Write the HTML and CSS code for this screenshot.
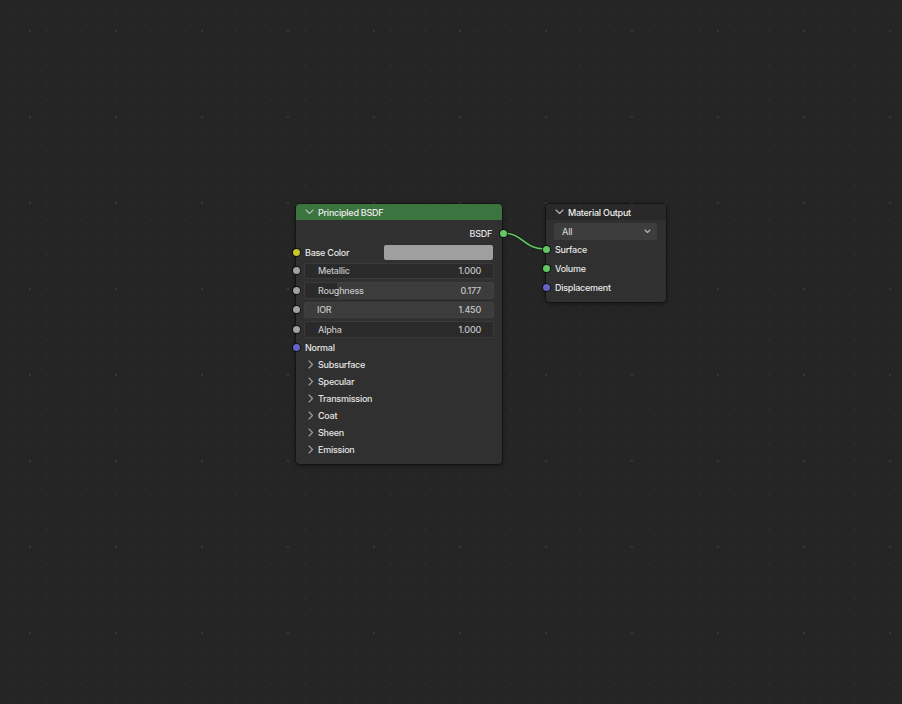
FILE: index.html
```html
<!DOCTYPE html>
<html>
<head>
<meta charset="utf-8">
<link rel="stylesheet" href="styles.css">
</head>
<body>
<div class="canvas">
  <svg class="links" width="902" height="704" viewBox="0 0 902 704">
    <path d="M502 233 C 524 233, 523 249, 545 249" class="link-shadow"/>
    <path d="M502 233 C 524 233, 523 249, 545 249" class="link"/>
  </svg>

  <div class="node node-bsdf">
    <div class="header header-green">
      <svg class="chev-down" width="9" height="6" viewBox="0 0 9 6"><path d="M1 1 L4.5 4.5 L8 1"/></svg>
      <span>Principled BSDF</span>
    </div>
    <div class="body">
      <div class="row row-out">
        <span>BSDF</span>
        <i class="socket sock-right green"></i>
      </div>
      <div class="row row-color">
        <i class="socket sock-left yellow"></i>
        <span class="label">Base Color</span>
        <div class="swatch"></div>
      </div>
      <div class="fields">
        <div class="field">
          <i class="socket sock-left grey"></i>
          <div class="fill" style="width:100%"></div>
          <span class="fl">Metallic</span><span class="fv">1.000</span>
        </div>
        <div class="field">
          <i class="socket sock-left grey"></i>
          <div class="fill" style="width:17.7%"></div>
          <span class="fl">Roughness</span><span class="fv">0.177</span>
        </div>
        <div class="field">
          <i class="socket sock-left grey"></i>
          <span class="fl ior">IOR</span><span class="fv">1.450</span>
        </div>
        <div class="field">
          <i class="socket sock-left grey"></i>
          <div class="fill" style="width:100%"></div>
          <span class="fl">Alpha</span><span class="fv">1.000</span>
        </div>
      </div>
      <div class="row row-normal">
        <i class="socket sock-left purple"></i>
        <span class="label">Normal</span>
      </div>
      <div class="panels">
        <div class="panel"><svg class="chev-right" width="6" height="9" viewBox="0 0 6 9"><path d="M1 1 L4.5 4.5 L1 8"/></svg><span>Subsurface</span></div>
        <div class="panel"><svg class="chev-right" width="6" height="9" viewBox="0 0 6 9"><path d="M1 1 L4.5 4.5 L1 8"/></svg><span>Specular</span></div>
        <div class="panel"><svg class="chev-right" width="6" height="9" viewBox="0 0 6 9"><path d="M1 1 L4.5 4.5 L1 8"/></svg><span>Transmission</span></div>
        <div class="panel"><svg class="chev-right" width="6" height="9" viewBox="0 0 6 9"><path d="M1 1 L4.5 4.5 L1 8"/></svg><span>Coat</span></div>
        <div class="panel"><svg class="chev-right" width="6" height="9" viewBox="0 0 6 9"><path d="M1 1 L4.5 4.5 L1 8"/></svg><span>Sheen</span></div>
        <div class="panel"><svg class="chev-right" width="6" height="9" viewBox="0 0 6 9"><path d="M1 1 L4.5 4.5 L1 8"/></svg><span>Emission</span></div>
      </div>
    </div>
  </div>

  <div class="node node-output">
    <div class="header header-dark">
      <svg class="chev-down" width="9" height="6" viewBox="0 0 9 6"><path d="M1 1 L4.5 4.5 L8 1"/></svg>
      <span>Material Output</span>
    </div>
    <div class="body body-out">
      <div class="dropdown">
        <span>All</span>
        <svg class="chev-small" width="7" height="5" viewBox="0 0 7 5"><path d="M1 1 L3.5 3.5 L6 1"/></svg>
      </div>
      <div class="row row-in">
        <i class="socket sock-left green"></i>
        <span class="label">Surface</span>
      </div>
      <div class="row row-in">
        <i class="socket sock-left green"></i>
        <span class="label">Volume</span>
      </div>
      <div class="row row-in">
        <i class="socket sock-left purple"></i>
        <span class="label">Displacement</span>
      </div>
    </div>
  </div>
</div>
</body>
</html>
```

FILE: styles.css
```css
html, body {
  margin: 0;
  padding: 0;
}
body {
  width: 902px;
  height: 704px;
  overflow: hidden;
  background-color: #252525;
  background-image:
    radial-gradient(circle at 43px 43px, #363636 0, #363636 1px, transparent 1.6px),
    radial-gradient(circle at 8.6px 8.6px, #2c2c2c 0, #2c2c2c 0.7px, transparent 1.2px);
  background-size: 86px 86px, 17.2px 17.2px;
  background-position: -13px -12px, 21.4px 22.4px;
  font-family: Inter, "Noto Sans", "DejaVu Sans", sans-serif;
  font-size: 9px;
  font-weight: 500;
  letter-spacing: -0.25px;
  color: #e4e4e4;
}
.canvas {
  position: relative;
  width: 902px;
  height: 704px;
}
.links {
  position: absolute;
  left: 0;
  top: 0;
  z-index: 2;
  pointer-events: none;
}
.link {
  fill: none;
  stroke: #5fc25f;
  stroke-width: 1.6;
}
.link-shadow {
  fill: none;
  stroke: rgba(0,0,0,0.35);
  stroke-width: 3.2;
}
.node {
  position: absolute;
  background: #303030;
  border-radius: 4px;
  box-shadow: 0 1px 5px rgba(0,0,0,0.55), 0 0 0 1px rgba(0,0,0,0.25);
  display: flex;
  flex-direction: column;
}
.node-bsdf {
  left: 296px;
  top: 204px;
  width: 206px;
  height: 260px;
}
.node-output {
  left: 546px;
  top: 204px;
  width: 120px;
  height: 98px;
}
.header {
  height: 16px;
  display: flex;
  align-items: center;
  border-radius: 4px 4px 0 0;
  padding-left: 9px;
  gap: 4px;
  color: #ececec;
}
.header-green {
  background: #3c743f;
}
.header-dark {
  background: #292929;
}
.chev-down path, .chev-right path, .chev-small path {
  fill: none;
  stroke: #b8b8b8;
  stroke-width: 1.1;
  stroke-linecap: round;
  stroke-linejoin: round;
}
.chev-right path {
  stroke: #a0a0a0;
}
.body {
  display: flex;
  flex-direction: column;
  padding: 4px 9px 0 9px;
}
.row {
  position: relative;
  display: flex;
  align-items: center;
}
.row-out {
  height: 18px;
  justify-content: flex-end;
  padding-right: 1px;
}
.row-color {
  height: 20px;
  justify-content: space-between;
}
.swatch {
  width: 109px;
  height: 15px;
  background: #9f9f9f;
  border-radius: 2px;
}
.fields {
  display: flex;
  flex-direction: column;
  gap: 3px;
  margin: 0.5px -1px 0 -1px;
}
.field {
  position: relative;
  height: 16.5px;
  background: #3c3c3c;
  border-radius: 2px;
  box-shadow: inset 0 0 0 1px #404040;
  display: flex;
  align-items: center;
  justify-content: space-between;
  padding: 0 13px 0 14px;
  color: #c4c4c4;
}
.fill {
  position: absolute;
  left: 0;
  top: 0;
  bottom: 0;
  background: #2a2a2a;
  border-radius: 2px;
  box-shadow: inset 0 0 0 1px #3a3a3a;
}
.fl, .fv {
  position: relative;
}
.fl.ior {
  margin-left: -1px;
}
.row-normal {
  height: 18px;
  margin-top: 0.5px;
}
.panels {
  display: flex;
  flex-direction: column;
}
.panel {
  height: 17px;
  display: flex;
  align-items: center;
  gap: 4px;
  padding-left: 3px;
}
.socket {
  position: absolute;
  width: 7px;
  height: 7px;
  border-radius: 50%;
  box-shadow: 0 0 0 1px rgba(0,0,0,0.6);
  top: 50%;
  margin-top: -3.5px;
  z-index: 3;
}
.sock-left {
  left: -12.5px;
}
.field .sock-left {
  left: -11.5px;
}
.sock-right {
  right: -13.5px;
}
.body-out .sock-left {
  left: -12.5px;
}
.yellow { background: #c7c729; }
.grey { background: #a1a1a1; }
.purple { background: #6363c7; }
.green { background: #63c763; }
.body-out {
  padding: 3px 9px 0 9px;
}
.dropdown {
  height: 17px;
  margin-left: -1px;
  background: #3d3d3d;
  border-radius: 2px;
  display: flex;
  align-items: center;
  justify-content: space-between;
  padding: 0 6px 0 8px;
  color: #d0d0d0;
}
.row-in {
  height: 19px;
}
.row-in:first-of-type {
  margin-top: -1px;
}
.label {
  color: #e6e6e6;
}
```
